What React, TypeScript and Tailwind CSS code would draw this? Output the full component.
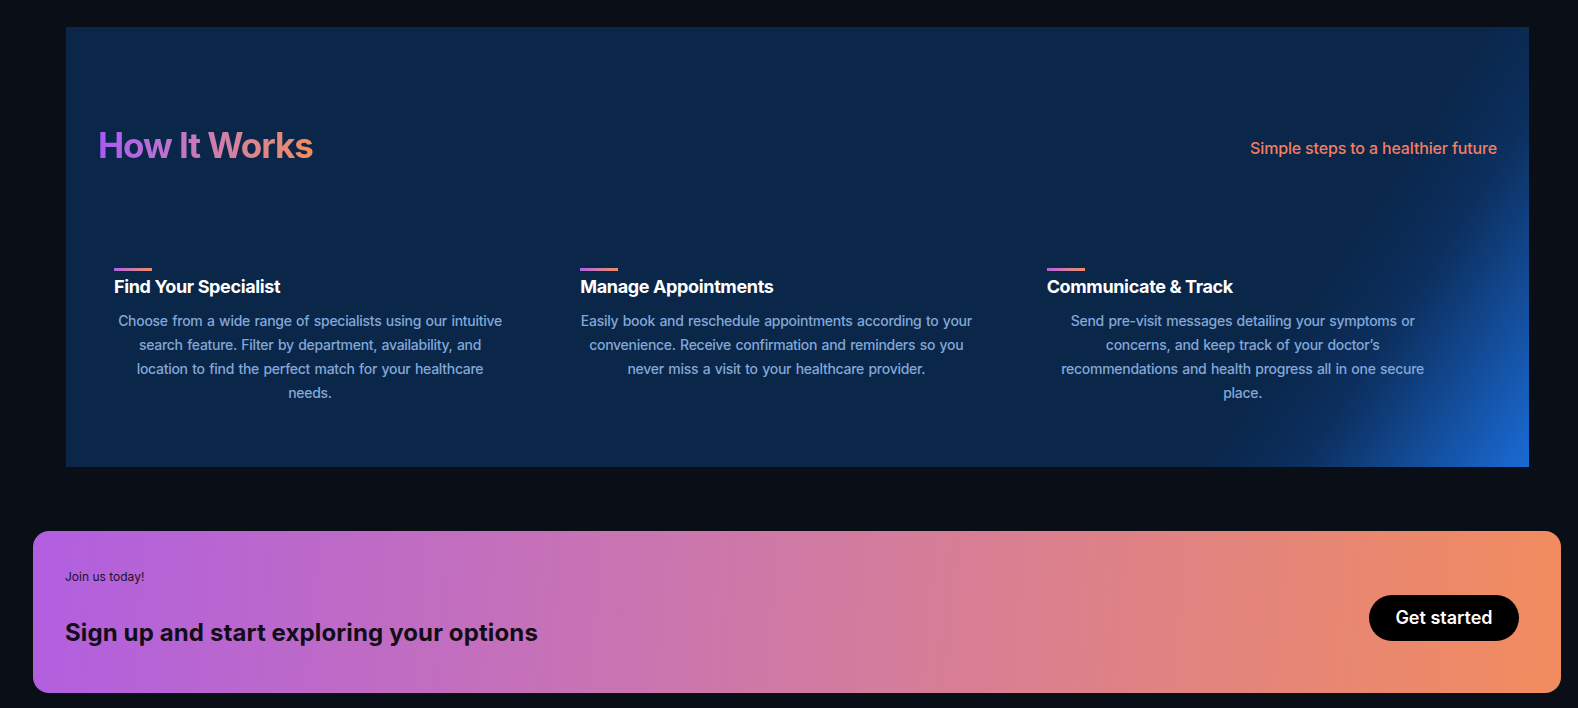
import React from "react";

// Steps shown in the "How It Works" panel
const steps = [
  {
    title: "Find Your Specialist",
    text: "Choose from a wide range of specialists using our intuitive search feature. Filter by department, availability, and location to find the perfect match for your healthcare needs.",
  },
  {
    title: "Manage Appointments",
    text: "Easily book and reschedule appointments according to your convenience. Receive confirmation and reminders so you never miss a visit to your healthcare provider.",
  },
  {
    title: "Communicate & Track",
    text: "Send pre-visit messages detailing your symptoms or concerns, and keep track of your doctor\u2019s recommendations and health progress all in one secure place.",
  },
];

function StepCard({ title, text }: { title: string; text: string }) {
  return (
    <div className="flex flex-col">
      <div className="h-[3px] w-[38px] bg-gradient-to-r from-[#b15fe2] to-[#f28a5b]" />
      <h3 className="mt-[2px] text-lg leading-7 font-bold text-white tracking-[-0.02em]">
        {title}
      </h3>
      <p className="mt-2 max-w-[392px] text-center text-sm leading-6 font-medium tracking-[-0.02em] [word-spacing:1px] text-[#82a8d8]">
        {text}
      </p>
    </div>
  );
}

export default function App() {
  return (
    <div
      className="min-h-[708px] w-full bg-[#0a0f17] pt-[27px] pb-[15px]"
      style={{ fontFamily: "Inter, 'Noto Sans', sans-serif" }}
    >
      {/* How It Works panel */}
      <section className="ml-[66px] h-[440px] w-[1463px] bg-[linear-gradient(123deg,#0a2649_0%,#0a2649_81%,#0c2f5e_87%,#1a6bd6_100%)] px-8 pt-[98px]">
        <div className="flex items-start justify-between">
          <h2 className="bg-gradient-to-r from-[#a75af5] to-[#f38c58] bg-clip-text text-[35px] leading-10 font-bold tracking-[-0.03em] text-transparent">
            How It Works
          </h2>
          <p className="mt-[11px] text-base leading-6 font-medium tracking-[-0.01em] text-[#f47d62]">
            Simple steps to a healthier future
          </p>
        </div>

        <div className="mt-[103px] grid grid-cols-3 gap-8 px-4">
          {steps.map((s) => (
            <StepCard key={s.title} title={s.title} text={s.text} />
          ))}
        </div>
      </section>

      {/* Call to action banner */}
      <section className="mt-16 ml-[33px] flex h-[162px] w-[1528px] justify-between rounded-2xl bg-[linear-gradient(95deg,#b15fe0_0%,#d07aa4_50%,#f28c5e_100%)] pr-[42px] pl-8">
        <div className="flex flex-col pt-[38px]">
          <p className="text-xs leading-4 text-[#1c1226]">Join us today!</p>
          <h2 className="mt-[32px] text-2xl leading-8 font-bold tracking-[0.005em] text-[#120d16]">
            Sign up and start exploring your options
          </h2>
        </div>
        <div className="pt-16">
          <button className="h-[46px] w-[150px] rounded-full bg-black text-lg font-semibold text-white">
            Get started
          </button>
        </div>
      </section>
    </div>
  );
}
